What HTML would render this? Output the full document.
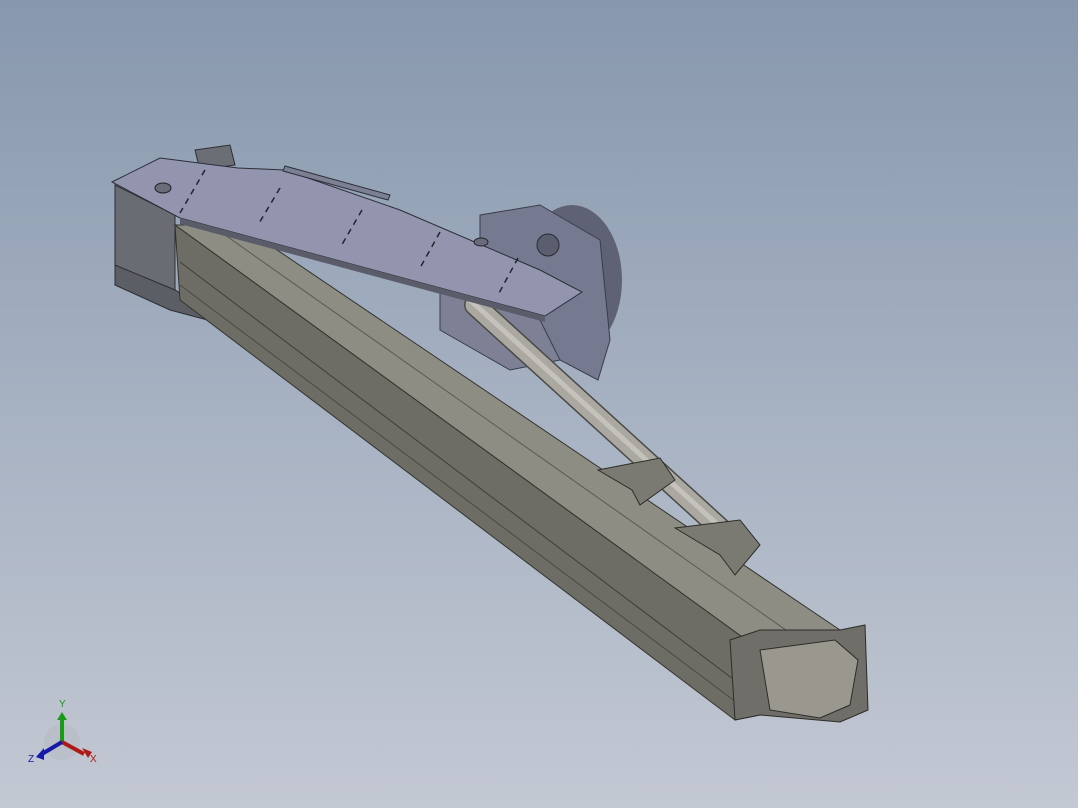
<!DOCTYPE html>
<html><head><meta charset="utf-8"><style>
html,body{margin:0;padding:0;width:1078px;height:808px;overflow:hidden}
body{background:linear-gradient(180deg,#8797ad 0%,#a3afc0 45%,#c3c8d3 100%);font-family:"Liberation Sans",sans-serif}
svg{position:absolute;left:0;top:0}
</style></head><body>
<svg width="1078" height="808" viewBox="0 0 1078 808">
<ellipse cx="572" cy="280" rx="50" ry="75" fill="#5e6274"/>
<polygon points="480,215 540,205 600,240 610,340 598,380 560,360 480,300" fill="#767a90" stroke="#3a3d48" stroke-width="1"/>
<circle cx="548" cy="245" r="11" fill="#5a5e6e" stroke="#2a2c33"/>
<polygon points="440,290 540,320 560,360 510,370 440,330" fill="#7e8196" stroke="#3a3d48"/>
<polygon points="115,185 175,215 175,290 115,272" fill="#6a6c74" stroke="#2c2e33"/>
<polygon points="115,265 175,290 245,330 170,310 115,285" fill="#5c5e66" stroke="#2c2e33"/>
<polygon points="195,150 230,145 235,165 200,170" fill="#6c6e76" stroke="#2c2e33"/>
<polygon points="175,225 240,225 840,630 760,650" fill="#8e8d84" stroke="#33342f"/>
<polygon points="175,225 760,650 760,715 735,720 180,300" fill="#6d6c65" stroke="#33342f"/>
<line x1="180" y1="262" x2="745" y2="688" stroke="#3e3e38"/>
<line x1="180" y1="285" x2="740" y2="705" stroke="#4a4a44"/>
<line x1="215" y1="228" x2="800" y2="640" stroke="#5a5a52"/>
<polygon points="730,640 760,630 840,630 865,625 868,710 840,722 760,715 735,720" fill="#6f6e68" stroke="#2c2c28"/>
<polygon points="760,650 835,640 858,660 850,705 820,718 770,710" fill="#9a988e" stroke="#2c2c28"/>
<line x1="475" y1="305" x2="722" y2="530" stroke="#4a4a46" stroke-width="22" stroke-linecap="round"/>
<line x1="475" y1="305" x2="722" y2="530" stroke="#aaa8a1" stroke-width="19" stroke-linecap="round"/>
<line x1="470" y1="300" x2="718" y2="525" stroke="#c4c2bb" stroke-width="5"/>
<polygon points="598,470 660,458 675,480 640,505 632,490" fill="#7a7972" stroke="#2c2c28"/>
<polygon points="675,528 740,520 760,545 735,575 720,555" fill="#7a7972" stroke="#2c2c28"/>
<polygon points="112,182 160,158 238,168 285,170 400,210 540,270 582,292 545,316 180,218" fill="#9295ad" stroke="#2c2e38"/>
<polygon points="180,218 545,316 545,322 180,224" fill="#5a5c6a"/>
<polygon points="285,166 390,195 388,200 283,171" fill="#7d8092" stroke="#2c2e38"/>
<g stroke="#22242c" stroke-width="1.5" stroke-dasharray="6,5">
<line x1="205" y1="170" x2="180" y2="213"/><line x1="280" y1="188" x2="258" y2="225"/>
<line x1="362" y1="210" x2="340" y2="248"/><line x1="440" y1="232" x2="420" y2="268"/>
<line x1="518" y1="258" x2="498" y2="295"/>
</g>
<ellipse cx="163" cy="188" rx="8" ry="5" fill="#6a6c7a" stroke="#22242c"/>
<ellipse cx="481" cy="242" rx="7" ry="4" fill="#6a6c7a" stroke="#22242c"/>
<g>
<circle cx="62" cy="742" r="18" fill="#b8bcc6" opacity="0.7"/>
<line x1="62" y1="742" x2="62" y2="718" stroke="#1a9a1a" stroke-width="4"/>
<polygon points="57,720 67,720 62,712" fill="#1a9a1a"/>
<line x1="62" y1="742" x2="84" y2="754" stroke="#b01818" stroke-width="4"/>
<polygon points="82,748 88,758 92,752" fill="#b01818"/>
<line x1="62" y1="742" x2="42" y2="754" stroke="#1818a8" stroke-width="4"/>
<polygon points="44,748 36,757 44,760" fill="#1818a8"/>
<text x="59" y="707" font-size="10" fill="#1a9a1a">Y</text>
<text x="90" y="762" font-size="10" fill="#b01818">X</text>
<text x="28" y="762" font-size="10" fill="#1818a8">Z</text>
</g>
</svg>
</body></html>
